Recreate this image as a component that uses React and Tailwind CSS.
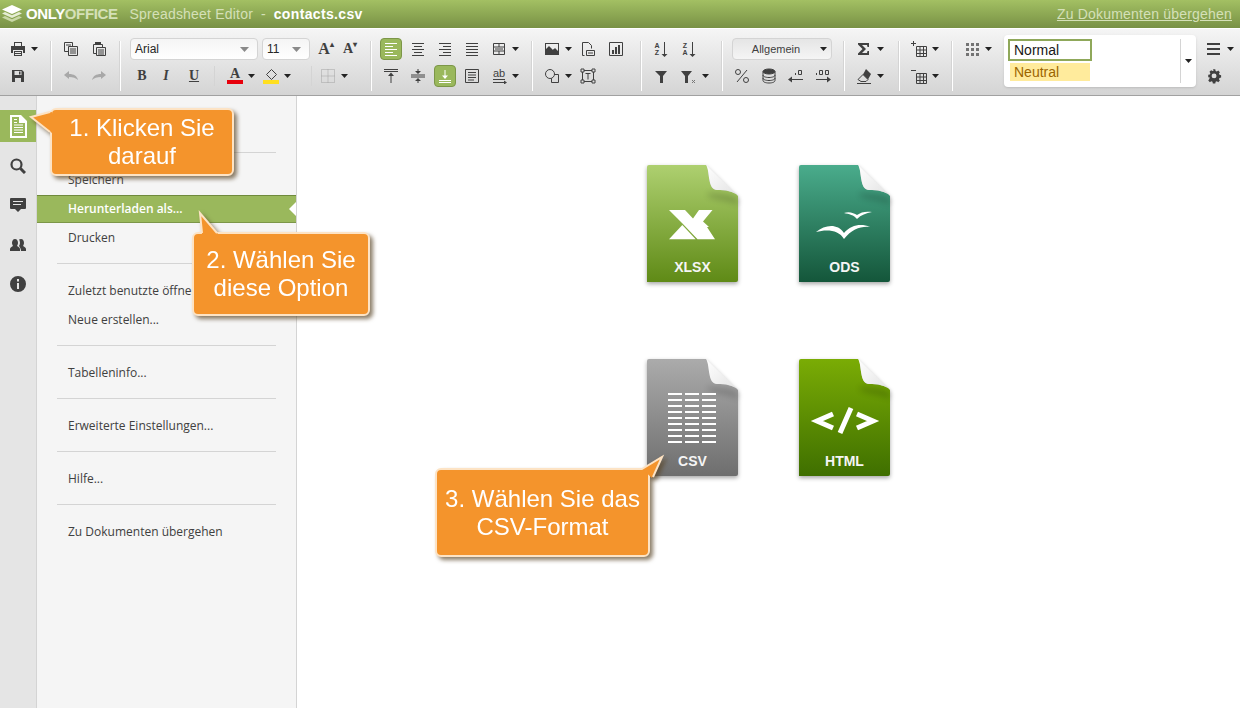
import React from "react";

const S = { fill: "none", stroke: "currentColor" };

const icons = {
  print: <path fill="currentColor" fillRule="evenodd" d="M4 1h8v4H4zM5 2v3h6V2zM1 5h14v7h-2V9H3v3H1zM4 10h8v5H4zM5 11v1h6v-1zM5 13v1h6v-1z" />,
  save: <path fill="currentColor" fillRule="evenodd" d="M2 2h10l2 2v10H2zM4.500 3v4h7V3zM5 10v4h6v-4zM9 3.500h1.500v3H9z" />,
  copy: <g {...S}><path d="M1.500 1.500h8v9h-8z" /><path fill="#e5e5e5" d="M5.500 5.500h9v9h-9z" /><path d="M7 8h6M7 10h6M7 12h6M3 4h5" /></g>,
  paste: <g {...S}><path d="M2.500 3.500h9v5M2.500 3.500v9h3" /><path fill="#404040" stroke="none" d="M4 1h6v3H4z" /><path fill="#e5e5e5" d="M5.500 6.500h9v8h-9z" /><path d="M7 9h6M7 11h6M7 13h6" /></g>,
  undo: <path fill="#a8a8a8" d="M1 7l5-4v3c5 0 8 2 9 6-2-2-5-3-9-3v2z" />,
  redo: <path fill="#a8a8a8" d="M15 7l-5-4v3C5 6 2 8 1 12c2-2 5-3 9-3v2z" />,
  alignL: <path {...S} d="M2 2.500h12M2 5.500h8M2 8.500h12M2 11.500h8M2 14.500h12" />,
  alignC: <path {...S} d="M2 2.500h12M4 5.500h8M2 8.500h12M4 11.500h8M2 14.500h12" />,
  alignR: <path {...S} d="M2 2.500h12M6 5.500h8M2 8.500h12M6 11.500h8M2 14.500h12" />,
  alignJ: <path {...S} d="M2 2.500h12M2 5.500h12M2 8.500h12M2 11.500h12M2 14.500h12" />,
  merge: <g {...S}><path d="M2.500 2.500h11v11h-11zM2.500 6h11M2.500 10h11M8 2.500V6M8 10v3.500" /><path d="M4 8h8" /></g>,
  top: <g {...S}><path d="M1 1.500h14M1 3.500h14M8 15V6" /><path fill="currentColor" stroke="none" d="M8 4.500l3 3.500H5z" /></g>,
  middle: <g {...S}><path d="M1 7h14M1 9h14M8 1v3M8 12v3" /><path fill="currentColor" stroke="none" d="M8 6L5 3h6zM8 10l3 3H5z" /></g>,
  bottom: <g {...S}><path d="M2 12.500h12M2 14.500h12M8 2v6" /><path fill="currentColor" stroke="none" d="M8 11L5 7.500h6z" /></g>,
  wrap: <g {...S}><path d="M1.500 1.500h13v13h-13zM4 4.500h8M4 7h8M4 9.500h8M4 12h6" /></g>,
  orient: <g><text x="8" y="9" textAnchor="middle" fontSize="11" fill="currentColor" fontFamily="Liberation Sans">ab</text><path {...S} d="M2 11.500h12M2 14.500h11" /><path fill="currentColor" d="M16 14.500l-3-2v4z" /></g>,
  image: <g><path fill="currentColor" fillRule="evenodd" d="M1 2h14v12H1zM2 3v7l3-3 3 3 2-2 4 4V3z" /><path fill="currentColor" d="M2 8l3-3 4 4 2-2 3 3v2H2z" /></g>,
  link: <g {...S}><path d="M2.500 14.500v-13h6l3 3v3M2.500 14.500h2" /><path d="M6.500 9.500h8v5h-8zM8 12h5" /></g>,
  chart: <g><path {...S} d="M1.500 1.500h13v13h-13z" /><path fill="currentColor" d="M4 9h2v4H4zM7 6h2v7H7zM10 4h2v9h-2z" /></g>,
  shape: <g {...S}><path d="M7.500 6.500h7v8h-7z" /><circle cx="6" cy="6" r="4.500" fill="#e0e0e0" /></g>,
  textbox: <g {...S}><path d="M2.500 2.500h11v11h-11z" /><path fill="#e0e0e0" d="M1 1h3v3H1zM12 1h3v3h-3zM1 12h3v3H1zM12 12h3v3h-3z" /><path d="M5.500 5.500h5M8 5.500v6" /></g>,
  sortAZ: <g><text x="4" y="7" textAnchor="middle" fontSize="7" fontWeight="700" fill="currentColor" fontFamily="Liberation Sans">A</text><text x="4" y="14" textAnchor="middle" fontSize="7" fontWeight="700" fill="currentColor" fontFamily="Liberation Sans">Z</text><path {...S} d="M11.500 1v13" /><path fill="currentColor" d="M11.500 16l-3-3h6z" /></g>,
  sortZA: <g><text x="4" y="7" textAnchor="middle" fontSize="7" fontWeight="700" fill="currentColor" fontFamily="Liberation Sans">Z</text><text x="4" y="14" textAnchor="middle" fontSize="7" fontWeight="700" fill="currentColor" fontFamily="Liberation Sans">A</text><path {...S} d="M11.500 1v13" /><path fill="currentColor" d="M11.500 16l-3-3h6z" /></g>,
  filter: <path fill="currentColor" d="M1 3h12L9 8v7H6V8z" transform="translate(1)" />,
  filterX: <g><path fill="currentColor" d="M0 3h11L7 8v7H4V8z" /><path stroke="#777" fill="none" d="M11 12l3 3M14 12l-3 3" /></g>,
  percent: <g {...S}><path d="M3 14L13 2" /><circle cx="4" cy="4" r="2.500" /><circle cx="12" cy="12" r="2.500" /></g>,
  db: <g {...S}><ellipse cx="8" cy="3.500" rx="6" ry="2.500" fill="currentColor" /><path d="M2 3.500v9c0 1.500 2.500 2.500 6 2.500s6-1 6-2.500v-9M2 7c0 1.500 2.500 2.500 6 2.500S14 8.500 14 7M2 10c0 1.500 2.500 2.500 6 2.500s6-1 6-2.500" /></g>,
  decLeft: <g><path {...S} d="M10.500 2.500h3v4h-3zM3 11.500h12" /><path fill="currentColor" d="M7 5h1v2H7zM0 11.500l4-3v6z" /></g>,
  decRight: <g><path fill="currentColor" d="M1 5h1v2H1z" /><path {...S} d="M4.500 2.500h3v4h-3zM10.500 2.500h3v4h-3zM1 11.500h12" /><path fill="currentColor" d="M16 11.500l-4-3v6z" /></g>,
  sigma: <path fill="currentColor" d="M2 2h11v4h-1.500L11 4H6l4 4-4 4h5l.5-2H13v4H2v-1.500L6.500 8 2 3.500z" />,
  eraser: <g><path {...S} d="M1 15.500h14M2 11.500l5-5 5 5-2 2H5z" /><path fill="currentColor" d="M7 6.500L10 1l5 5-3 5.500z" /></g>,
  insCell: <g><path {...S} d="M5.500 5.500h10v10h-10zM9 5.500v10M12.500 5.500v10M5.500 9h10M5.500 12.500h10" /><path fill="currentColor" d="M2 0h1v2h2v1H3v2H2V3H0V2h2z" /></g>,
  delCell: <g><path {...S} d="M5.500 5.500h10v10h-10zM9 5.500v10M12.500 5.500v10M5.500 9h10M5.500 12.500h10" /><path fill="currentColor" d="M0 2h5v1H0z" /></g>,
  dots: <path fill="#737373" d="M2 2h3v3H2zM7 2h3v3H7zM12 2h3v3h-3zM2 7h3v3H2zM7 7h3v3H7zM12 7h3v3h-3zM2 12h3v3H2zM7 12h3v3H7zM12 12h3v3h-3z" />,
  menu: <path fill="currentColor" d="M1 2h13v2H1zM1 7h13v2H1zM1 12h13v2H1z" />,
  gear: <path fill="currentColor" fillRule="evenodd" d="M6.500 1h3l.4 2 1.500.6 1.700-1.100 2 2-1.100 1.700.6 1.500 2 .4v3l-2 .4-.6 1.500 1.100 1.700-2 2-1.700-1.100-1.500.6-.4 2h-3l-.4-2-1.500-.6-1.700 1.100-2-2 1.100-1.700L2.900 11l-2-.4v-3l2-.4.6-1.500L2.400 4l2-2 1.700 1.100 1.500-.6zM8 6a3 3 0 100 6 3 3 0 000-6z" transform="translate(1.500 .500) scale(.82)" />,
  border: <path fill="none" stroke="#a3a3a3" strokeDasharray="1 1" d="M1.500 1.500h13v13h-13zM8 1.500v13M1.500 8h13" />,
};

function Icon({ name }) {
  return (
    <svg width="16" height="16" viewBox="0 0 16 16" className="shrink-0">
      {icons[name]}
    </svg>
  );
}

function Caret() {
  return (
    <span className="flex w-2 justify-center">
      <svg width="7" height="4" viewBox="0 0 7 4">
        <path d="M0 0h7L3.500 4z" fill="#222" />
      </svg>
    </span>
  );
}

function Btn({ name, caret, active, className = "" }) {
  return (
    <div className={`flex items-center ${className}`}>
      <span className="flex h-6 w-6 items-center justify-center text-neutral-700">
        {active ? (
          <span className="flex h-5.5 w-5.5 items-center justify-center rounded-sm border border-[#7c9648] bg-[#9ab85c] text-white">
            <Icon name={name} />
          </span>
        ) : (
          <Icon name={name} />
        )}
      </span>
      {caret && <Caret />}
    </div>
  );
}

function Sep() {
  return <div className="h-12.5 w-px shrink-0 self-center bg-neutral-300 shadow-[1px_0_0_#fff]" />;
}

function Rows({ className = "", top, bottom }) {
  return (
    <div className={`flex flex-col gap-0.75 ${className}`}>
      <div className="flex h-6 items-center">{top}</div>
      <div className="flex h-6 items-center">{bottom}</div>
    </div>
  );
}

function Combo({ value, className }) {
  return (
    <div className={`flex h-5.5 items-center justify-between rounded-sm border border-neutral-300 bg-gradient-to-b from-neutral-100 to-white pl-1 pr-2 text-xs text-neutral-800 ${className}`}>
      <span>{value}</span>
      <svg width="9" height="5" viewBox="0 0 9 5">
        <path d="M0 0h9L4.500 5z" fill="#8a8a8a" />
      </svg>
    </div>
  );
}

function Letter({ children, className = "" }) {
  return (
    <span className={`flex h-6 w-6 items-center justify-center font-['Liberation_Serif'] font-bold text-neutral-700 ${className}`}>
      {children}
    </span>
  );
}

function Toolbar() {
  return (
    <div className="flex h-17 border-t border-b border-t-white border-b-neutral-400 bg-gradient-to-b from-neutral-100 to-neutral-300 pt-2 font-['Liberation_Sans']">
      <Rows className="pl-1.5 pr-3" top={<Btn name="print" caret />} bottom={<Btn name="save" />} />
      <Sep />
      <Rows
        className="pl-2 pr-2"
        top={<><Btn name="copy" /><Btn name="paste" className="ml-1" /></>}
        bottom={<><Btn name="undo" /><Btn name="redo" className="ml-1" /></>}
      />
      <Sep />
      <Rows
        className="pl-2.5 pr-2"
        top={
          <>
            <Combo value="Arial" className="w-32" />
            <Combo value="11" className="ml-1 w-12" />
            <Letter className="ml-1 text-base">A<sup className="text-[8px]">▴</sup></Letter>
            <Letter className="text-sm">A<sup className="text-[8px]">▾</sup></Letter>
          </>
        }
        bottom={
          <>
            <Letter className="text-sm">B</Letter>
            <Letter className="text-sm italic">I</Letter>
            <Letter className="ml-1 text-sm underline">U</Letter>
            <div className="ml-2 h-5 w-px bg-neutral-300" />
            <div className="ml-2 flex items-center">
              <span className="flex h-6 w-6 flex-col items-center justify-center font-['Liberation_Serif'] text-sm font-bold leading-3 text-neutral-700">
                A
                <span className="h-1 w-4 bg-red-600" />
              </span>
              <Caret />
            </div>
            <div className="ml-1 flex items-center">
              <span className="flex h-6 w-6 flex-col items-center justify-center">
                <svg width="14" height="11" viewBox="0 0 14 11">
                  <path d="M7.500.5l5 5-5 5-5-5z" fill="none" stroke="#404040" />
                </svg>
                <span className="h-1 w-4 bg-yellow-300" />
              </span>
              <Caret />
            </div>
            <div className="ml-5 h-5 w-px bg-neutral-300" />
            <Btn name="border" caret className="ml-1" />
          </>
        }
      />
      <Sep />
      <Rows
        className="pl-2 pr-3"
        top={
          <div className="flex gap-0.75">
            <Btn name="alignL" active />
            <Btn name="alignC" />
            <Btn name="alignR" />
            <Btn name="alignJ" />
            <Btn name="merge" caret />
          </div>
        }
        bottom={
          <div className="flex gap-0.75">
            <Btn name="top" />
            <Btn name="middle" />
            <Btn name="bottom" active />
            <Btn name="wrap" />
            <Btn name="orient" caret />
          </div>
        }
      />
      <Sep />
      <Rows
        className="pl-2 pr-3"
        top={<><Btn name="image" caret /><Btn name="link" className="ml-1" /><Btn name="chart" className="ml-1" /></>}
        bottom={<><Btn name="shape" caret /><Btn name="textbox" className="ml-1" /></>}
      />
      <Sep />
      <Rows
        className="pl-2 pr-3"
        top={<><Btn name="sortAZ" /><Btn name="sortZA" className="ml-1" /></>}
        bottom={<><Btn name="filter" /><Btn name="filterX" caret className="ml-1" /></>}
      />
      <Sep />
      <Rows
        className="pl-2 pr-2"
        top={
          <div className="ml-0.5 flex h-5.5 w-25 items-center justify-between rounded-sm border border-neutral-300 bg-gradient-to-b from-neutral-200 to-neutral-100 pr-1 text-[11px] text-neutral-700">
            <span className="flex-1 text-center">Allgemein</span>
            <Caret />
          </div>
        }
        bottom={
          <div className="flex gap-0.75">
            <Btn name="percent" />
            <Btn name="db" />
            <Btn name="decLeft" />
            <Btn name="decRight" />
          </div>
        }
      />
      <Sep />
      <Rows className="pl-2 pr-3.5" top={<Btn name="sigma" caret />} bottom={<Btn name="eraser" caret />} />
      <Sep />
      <Rows className="pl-2 pr-3" top={<Btn name="insCell" caret />} bottom={<Btn name="delCell" caret />} />
      <Sep />
      <Rows className="pl-2" top={<Btn name="dots" caret />} bottom={<div />} />
      <div className="-mt-0.5 ml-3 flex h-13 w-48 rounded-sm bg-white shadow-sm">
        <div className="flex flex-1 flex-col pl-1 pt-1">
          <div className="flex h-5.5 w-21 items-center border-2 border-[#8fa85a] pl-1 text-sm leading-none text-neutral-900">Normal</div>
          <div className="ml-0.5 mt-0.5 flex h-4.5 w-20 items-center bg-[#ffeb9c] pl-1 text-sm leading-none text-[#9c6500]">Neutral</div>
        </div>
        <div className="my-1 flex w-4 items-center justify-center border-l border-neutral-300">
          <Caret />
        </div>
      </div>
      <Rows className="ml-1.5" top={<Btn name="menu" caret />} bottom={<Btn name="gear" />} />
    </div>
  );
}

function Rail() {
  const items = [
    <g key="search">
      <circle cx="6.500" cy="6.500" r="5" fill="none" stroke="#404040" strokeWidth="2.200" />
      <path d="M10.500 10.500L15 15" stroke="#404040" strokeWidth="3" />
    </g>,
    <path key="chat" fill="#404040" fillRule="evenodd" d="M1 1h14q1 0 1 1v9q0 1-1 1h-4l-3 3-3-3H1q-1 0-1-1V2q0-1 1-1zM3 4v1h10V4zM3 7v1h8V7z" />,
    <path key="people" fill="#404040" d="M5 2c2 0 3 2 3 4 0 1-1 3-1 3 1 .5 3 1.500 3 3v2H0v-2c0-1.500 2-2.500 3-3 0 0-1-2-1-3 0-2 1-4 3-4zM11 2c2 0 3 2 3 4 0 1-1 3-1 3 1 .5 3 1.500 3 3v2h-5c0-2-1-4-2-5 .5-1 1-2 1-3 0-1.500-.500-3-1-3.500.5-.3 1.200-.5 2-.5z" />,
    <path key="info" fill="#404040" fillRule="evenodd" d="M8 0a8 8 0 110 16A8 8 0 018 0zM7 3v2.500h2V3zM7 7v6h2V7z" />,
  ];
  return (
    <div className="box-content flex w-9 shrink-0 flex-col gap-[7.5px] border-r border-neutral-300 bg-neutral-200 pt-3.5">
      <div className="flex h-8 items-center justify-center bg-[#9ab85c]">
        <svg width="19" height="23" viewBox="0 0 19 23">
          <path fill="#fff" fillRule="evenodd" d="M1 0h11l6 6v17H1zM3 2v19h13V8h-6V2zM5 4h3v1H5zM5 7h3v1H5zM5 9.500h9v1H5zM5 12h9v1H5zM5 14.500h9v1H5zM5 17h9v1H5z" />
        </svg>
      </div>
      {items.map((it, i) => (
        <div key={i} className="flex h-8 items-center justify-center">
          <svg width="16" height="16" viewBox="0 0 16 16">{it}</svg>
        </div>
      ))}
    </div>
  );
}

function MenuItem({ label, active }) {
  if (active) {
    return (
      <div className="relative flex h-7 items-center border-y border-t-[#6f8a3c] border-b-[#7c9648] bg-[#9ab85c] pl-7.75 font-semibold text-white">
        {label}
        <svg width="7" height="14" viewBox="0 0 7 14" className="absolute right-0 top-1.5">
          <path d="M7 0v14L0 7z" fill="#fff" />
        </svg>
      </div>
    );
  }
  return <div className="flex h-7 items-center pl-7.75">{label}</div>;
}

function MenuGroup({ children }) {
  return (
    <>
      <div className="mx-5 h-px shrink-0 bg-neutral-300" />
      <div className="mb-2.75 mt-3.25 flex flex-col gap-px">{children}</div>
    </>
  );
}

function Menu() {
  return (
    <div className="w-65 shrink-0 border-r border-neutral-300 bg-neutral-100 pt-14 font-['Open_Sans'] text-xs text-neutral-700">
      <MenuGroup>
        <MenuItem label="Speichern" />
        <MenuItem label="Herunterladen als..." active />
        <MenuItem label="Drucken" />
      </MenuGroup>
      <MenuGroup>
        <MenuItem label="Zuletzt benutzte öffnen..." />
        <MenuItem label="Neue erstellen..." />
      </MenuGroup>
      <MenuGroup>
        <MenuItem label="Tabelleninfo..." />
      </MenuGroup>
      <MenuGroup>
        <MenuItem label="Erweiterte Einstellungen..." />
      </MenuGroup>
      <MenuGroup>
        <MenuItem label="Hilfe..." />
      </MenuGroup>
      <MenuGroup>
        <MenuItem label="Zu Dokumenten übergehen" />
      </MenuGroup>
    </div>
  );
}

const BODY = "M2 0H59C63 4 60 25 70 25C78 25 87 26 91 31V115Q91 117 89 117H0V2Q0 0 2 0Z";
const FOLD = "M59 0L91 31C87 26 78 25 70 25C60 25 63 4 59 0Z";

function FileIcon({ id, from, to, label, children }) {
  return (
    <div className="relative h-29.5 w-23 font-['Liberation_Sans']">
      <svg width="91" height="117" viewBox="0 0 91 117" className="overflow-visible drop-shadow-[0_2px_2px_rgba(0,0,0,0.35)]">
        <defs>
          <linearGradient id={id} x1="0" y1="0" x2="0" y2="1">
            <stop offset="0" stopColor={from} />
            <stop offset="1" stopColor={to} />
          </linearGradient>
          <linearGradient id={id + "f"} x1="0" y1="0" x2="1" y2="1">
            <stop offset="0" stopColor="#ffffff" />
            <stop offset="1" stopColor="#e2e2e2" />
          </linearGradient>
          <filter id={id + "b"} x="-50%" y="-50%" width="200%" height="200%">
            <feGaussianBlur stdDeviation="3" />
          </filter>
        </defs>
        <path d={BODY} fill={`url(#${id})`} />
        <path d="M62 28C72 29 84 29 91 34V40C80 34 68 36 60 30Z" fill="#000" opacity="0.18" filter={`url(#${id}b)`} />
        <path d={FOLD} fill={`url(#${id}f)`} />
        {children}
      </svg>
      <span className="absolute inset-x-0 bottom-1.5 pr-px text-center text-sm font-bold leading-5 text-neutral-100">{label}</span>
    </div>
  );
}

function Tail({ className, w, h, fill, edge }) {
  return (
    <svg width={w} height={h} viewBox={`0 0 ${w} ${h}`} className={`absolute overflow-visible ${className}`}>
      <path d={fill} fill="#f4942c" />
      <path d={edge} fill="none" stroke="#fde3c4" strokeWidth="2" />
    </svg>
  );
}

function Callout({ className, children, tail }) {
  return (
    <div className={`absolute drop-shadow-[3px_3px_2px_rgba(90,70,40,0.7)] ${className}`}>
      <div className="flex h-full items-center justify-center rounded-md border-2 border-[#fde3c4] bg-[#f4942c] text-center font-['Liberation_Sans'] text-2xl leading-7 text-white">
        <div>{children}</div>
      </div>
      {tail}
    </div>
  );
}

export default function App() {
  return (
    <div className="relative flex h-screen flex-col overflow-hidden bg-white">
      <div className="flex h-7 shrink-0 items-center bg-gradient-to-b from-[#a3c063] to-[#789145] pl-0.5 pr-2 font-['Liberation_Sans'] text-sm text-[#d5e0b8]">
        <svg width="20" height="18" viewBox="0 0 20 18" className="shrink-0">
          <path d="M10 0l10 4.500L10 9 0 4.500z" fill="#fff" />
          <path d="M3 7l7 3.200L17 7l3 1.500L10 13 0 8.500z" fill="#e6edd3" />
          <path d="M3 11l7 3.200L17 11l3 1.500L10 17 0 12.500z" fill="#c9d7a6" />
        </svg>
        <span className="ml-1 text-[15px] font-bold tracking-tight text-white">
          ONLY<span className="text-[#d5e0b8]">OFFICE</span>
        </span>
        <span className="ml-3 tracking-[0.2px]">Spreadsheet Editor</span>
        <span className="ml-2">-</span>
        <span className="ml-2 font-bold tracking-wide text-white">contacts.csv</span>
        <a className="ml-auto tracking-[0.2px] underline">Zu Dokumenten übergehen</a>
      </div>

      <Toolbar />

      <div className="flex flex-1">
        <Rail />
        <Menu />
        <div className="flex-1 pl-87.5 pt-17.25">
          <div className="grid w-fit grid-cols-2 gap-x-15 gap-y-19">
            <FileIcon id="xlsx" from="#aed070" to="#5f8a16" label="XLSX">
              <path fill="#fff" d="M22 45H38L46 53.500L52 45H65.500L56 56.500L62 62H60L68 74.300H50.500L35 58Z" />
              <path fill="#fff" d="M22 74.300L35.300 60L48.700 74.300Z" />
            </FileIcon>
            <FileIcon id="ods" from="#4aac8c" to="#14563a" label="ODS">
              <path fill="#fff" d="M17 67C26 60 38 58 45 68C52 60 62 58 71 62C62 61 53 64 45 74C40 65 28 64 17 67Z" />
              <path fill="#fff" d="M45 48C50 46 55 48 58 50C62 47 67 46 73 47C67 48 62 50 58 54C55 50 50 49 45 48Z" />
            </FileIcon>
            <FileIcon id="csv" from="#ababab" to="#6e6e6e" label="CSV">
              <g fill="#fff">
                {[34, 40, 46, 52, 58, 64, 70, 76, 82].map((y) => (
                  <g key={y}>
                    <rect x="21" y={y} width="14" height="2" />
                    <rect x="38" y={y} width="14" height="2" />
                    <rect x="55" y={y} width="14" height="2" />
                  </g>
                ))}
              </g>
            </FileIcon>
            <FileIcon id="html" from="#7aac05" to="#3f6f00" label="HTML">
              <path fill="none" stroke="#fff" strokeWidth="5" d="M34 55L18 62L34 69M58 55L74 62L58 69M52 49L41 74" />
            </FileIcon>
          </div>
        </div>
      </div>

      <Callout
        className="left-12.5 top-27 h-17 w-46"
        tail={<Tail className="-left-5 top-1" w={22} h={22} fill="M22 0L1 5L22 21Z" edge="M20 0L1 5L20 20" />}
      >
        1. Klicken Sie
        <br />
        darauf
      </Callout>
      <Callout
        className="left-48 top-58 h-21 w-44.5"
        tail={<Tail className="left-2 -top-5" w={18} h={22} fill="M2 22L0 1L18 22Z" edge="M2 21L0 1L17 21" />}
      >
        2. Wählen Sie
        <br />
        diese Option
      </Callout>
      <Callout
        className="left-108.75 top-117 h-22.25 w-53.75"
        tail={<Tail className="-right-3 -top-3" w={20} h={22} fill="M0 13L20 0L10 22Z" edge="M0 13L20 1L11 21" />}
      >
        3. Wählen Sie das
        <br />
        CSV-Format
      </Callout>
    </div>
  );
}
